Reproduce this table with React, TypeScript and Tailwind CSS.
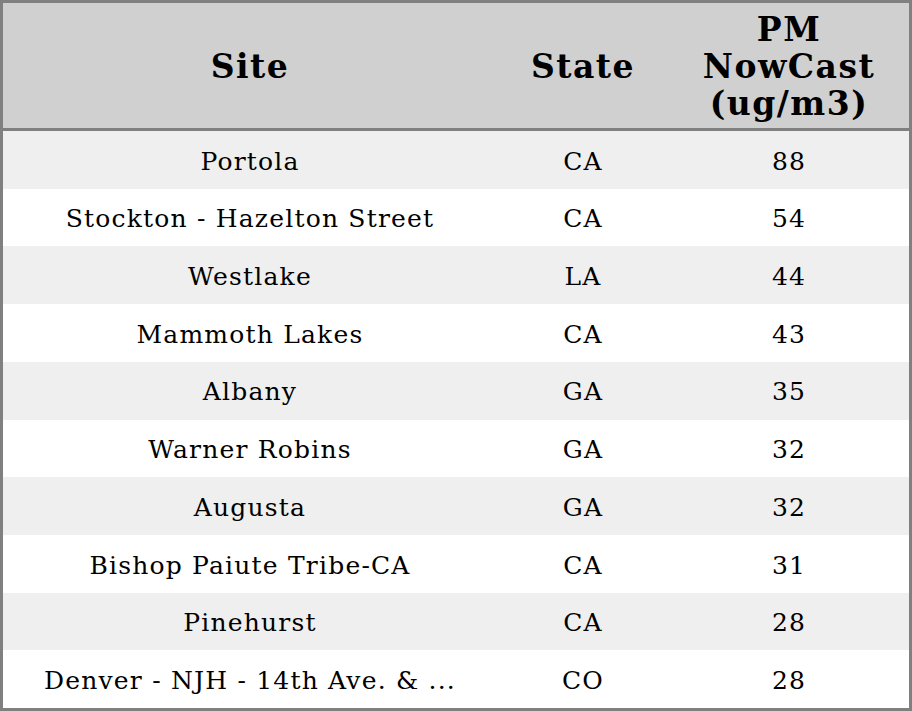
const rows = [
  { site: "Portola", state: "CA", pm: 88 },
  { site: "Stockton - Hazelton Street", state: "CA", pm: 54 },
  { site: "Westlake", state: "LA", pm: 44 },
  { site: "Mammoth Lakes", state: "CA", pm: 43 },
  { site: "Albany", state: "GA", pm: 35 },
  { site: "Warner Robins", state: "GA", pm: 32 },
  { site: "Augusta", state: "GA", pm: 32 },
  { site: "Bishop Paiute Tribe-CA", state: "CA", pm: 31 },
  { site: "Pinehurst", state: "CA", pm: 28 },
  { site: "Denver - NJH - 14th Ave. & ...", state: "CO", pm: 28 },
];

export default function App() {
  return (
    <div className="w-[912px] h-[711px] bg-white font-['DejaVu_Serif',serif] text-black">
      <div className="h-full border-[3px] border-[#808080] flex flex-col">
        <div className="flex h-[128px] bg-[#d0d0d0] border-b-[3px] border-[#808080] font-bold text-[33px] leading-[37px] tracking-[1.5px] text-center shrink-0">
          <div className="w-[494px] flex items-center justify-center pt-[2px]">Site</div>
          <div className="w-[172px] flex items-center justify-center pt-[2px]">State</div>
          <div className="flex-1 flex items-center justify-center pt-[2px]">
            PM
            <br />
            NowCast
            <br />
            (ug/m3)
          </div>
        </div>
        <div className="flex-1 flex flex-col">
          {rows.map((r, i) => (
            <div
              key={i}
              className={`flex flex-1 items-center pt-[3px] text-center text-[25px] tracking-[1.2px] ${i % 2 === 0 ? "bg-[#efefef]" : "bg-white"}`}
            >
              <div className="w-[494px]">{r.site}</div>
              <div className="w-[172px]">{r.state}</div>
              <div className="flex-1">{r.pm}</div>
            </div>
          ))}
        </div>
      </div>
    </div>
  );
}
